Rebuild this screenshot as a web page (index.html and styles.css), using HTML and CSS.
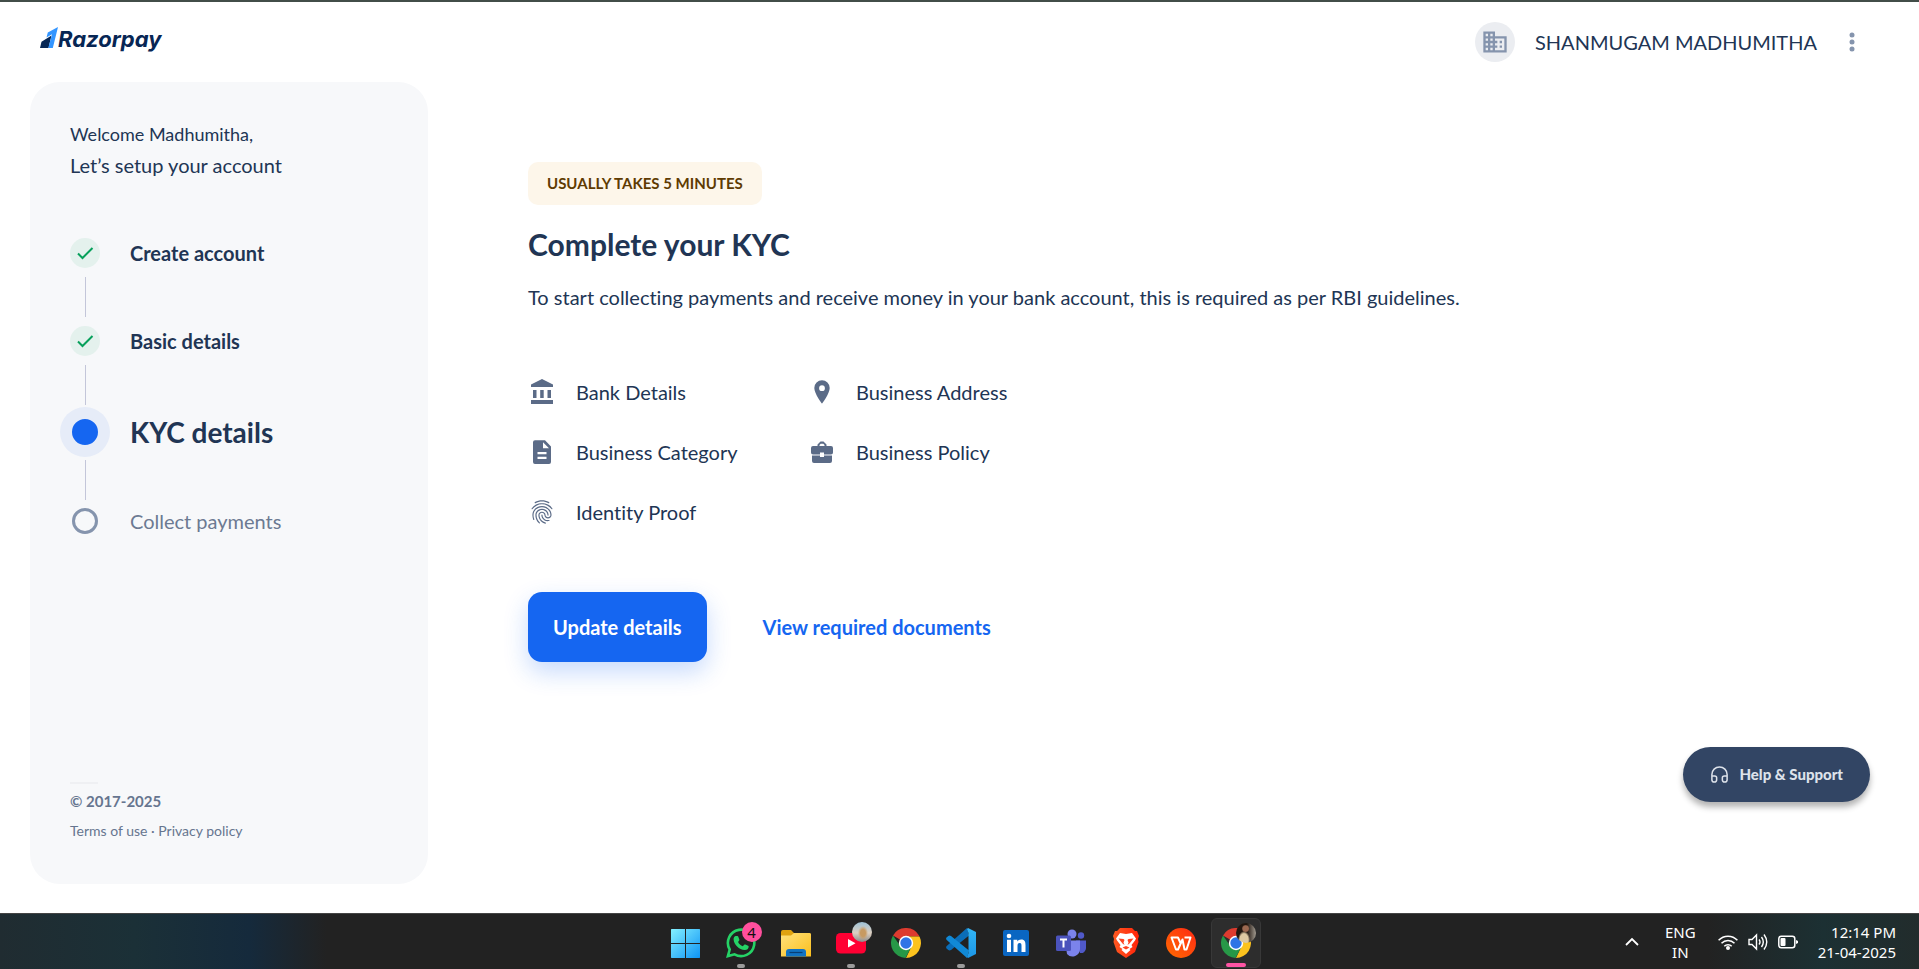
FILE: index.html
```html
<!DOCTYPE html>
<html lang="en">
<head>
<meta charset="utf-8">
<title>Razorpay</title>
<link rel="stylesheet" href="styles.css">
</head>
<body>
<svg class="defs" aria-hidden="true">
  <defs>
    <symbol id="chrome" viewBox="0 0 30 30">
      <path fill="#dd3b2f" d="M15 15 L2 7.500 A15 15 0 0 1 28 7.500 L28 8.500 H15Z"/>
      <path fill="#fcc31e" d="M15 8.500 H28.500 A15 15 0 0 1 15 30 L20.600 18.300Z"/>
      <path fill="#279847" d="M2 7.500 L9.400 18.300 L20.600 18.300 L14.500 30 A15 15 0 0 1 2 7.500Z"/>
      <circle cx="15" cy="15" r="7.200" fill="#fff"/>
      <circle cx="15" cy="15" r="5.700" fill="#2f74e6"/>
    </symbol>
    <symbol id="check" viewBox="0 0 30 30"><path fill="none" stroke="#07a05b" stroke-width="2" d="M8 15.500 L12.500 20 L22.500 10"/></symbol>
    <linearGradient id="g-win" x1="0" y1="0" x2="1" y2="1"><stop offset="0" stop-color="#84f0ff"/><stop offset="1" stop-color="#0d93f5"/></linearGradient>
    <linearGradient id="g-folder" x1="0" y1="0" x2="1" y2="1"><stop offset="0" stop-color="#ffe17c"/><stop offset="1" stop-color="#fbbf1d"/></linearGradient>
    <linearGradient id="g-vs" x1="0" y1="0" x2="0" y2="1"><stop offset="0" stop-color="#32b5f5"/><stop offset="1" stop-color="#1c97e8"/></linearGradient>
    <linearGradient id="g-brave" x1="0" y1="0" x2="1" y2="0"><stop offset="0" stop-color="#ff5a22"/><stop offset="1" stop-color="#ff2309"/></linearGradient>
    <linearGradient id="g-wps" x1="0" y1="1" x2="1" y2="0"><stop offset="0" stop-color="#ff6a00"/><stop offset="1" stop-color="#ff2a14"/></linearGradient>
  </defs>
</svg>

<div class="page">
  <header class="topbar">
    <a class="brand" href="#" aria-label="Razorpay">
      <svg class="brand-mark" viewBox="0 0 18 22" aria-hidden="true">
        <path fill="#072654" d="M1.500 14.800 L11.500 8.500 L8.500 21 H0Z"/>
        <path fill="#3395ff" d="M6.500 10.500 L7.800 5.500 L18 0 L12.800 21 H8.300 L12 7.200Z"/>
      </svg>
      <span class="brand-name">Razorpay</span>
    </a>
    <div class="account">
      <span class="avatar">
        <svg viewBox="0 0 24 24" aria-hidden="true"><path fill="#8594ad" d="M12 7V3H2v18h20V7H12zM6 19H4v-2h2v2zm0-4H4v-2h2v2zm0-4H4V9h2v2zm0-4H4V5h2v2zm4 12H8v-2h2v2zm0-4H8v-2h2v2zm0-4H8V9h2v2zm0-4H8V5h2v2zm10 12h-8v-2h2v-2h-2v-2h2v-2h-2V9h8v10zm-2-8h-2v2h2v-2zm0 4h-2v2h2v-2z"/></svg>
      </span>
      <span class="account-name">SHANMUGAM MADHUMITHA</span>
      <button class="more" type="button" aria-label="More options">
        <svg viewBox="0 0 6 20" aria-hidden="true"><g fill="#8594ad"><circle cx="3" cy="3" r="2.500"/><circle cx="3" cy="10" r="2.500"/><circle cx="3" cy="17" r="2.500"/></g></svg>
      </button>
    </div>
  </header>

  <div class="layout">
    <aside class="sidebar">
      <p class="welcome">Welcome Madhumitha,</p>
      <p class="subtitle">Let’s setup your account</p>
      <ol class="steps">
        <li class="step"><span class="marker done"><svg viewBox="0 0 30 30" aria-hidden="true"><use href="#check"/></svg></span><span class="label strong">Create account</span></li>
        <li class="line"></li>
        <li class="step"><span class="marker done"><svg viewBox="0 0 30 30" aria-hidden="true"><use href="#check"/></svg></span><span class="label strong">Basic details</span></li>
        <li class="line to-current"></li>
        <li class="step current" aria-current="step"><span class="marker now"></span><span class="label">KYC details</span></li>
        <li class="line from-current"></li>
        <li class="step"><span class="marker todo"></span><span class="label muted">Collect payments</span></li>
      </ol>
      <footer class="legal">
        <p class="copyright">© 2017-2025</p>
        <p class="links"><a href="#">Terms of use</a> · <a href="#">Privacy policy</a></p>
      </footer>
    </aside>

    <main class="content">
      <p class="tag">USUALLY TAKES 5 MINUTES</p>
      <h1>Complete your KYC</h1>
      <p class="lead">To start collecting payments and receive money in your bank account, this is required as per RBI guidelines.</p>
      <ul class="needs">
        <li><svg viewBox="0 0 28 28" aria-hidden="true"><path fill="#5b6b87" d="M14 1 L25 6.500 V9 H3 V6.500Z M5 12h3.500v8H5z M12.200 12h3.500v8h-3.500z M19.500 12H23v8h-3.500z M3 22h22v4H3z"/></svg>Bank Details</li>
        <li><svg viewBox="0 0 28 28" aria-hidden="true"><path fill="#5b6b87" fill-rule="evenodd" d="M14 2.300a7.700 7.700 0 0 0-7.700 7.700c0 5.700 7.700 15.600 7.700 15.600s7.700-9.900 7.700-15.600A7.700 7.700 0 0 0 14 2.300zm0 5a2.900 2.900 0 1 1 0 5.800 2.900 2.900 0 0 1 0-5.800z"/></svg>Business Address</li>
        <li><svg viewBox="0 0 28 28" aria-hidden="true"><path fill="#5b6b87" fill-rule="evenodd" d="M7 2.200h10l6 6.300v15.500a2 2 0 0 1-2 2H7a2 2 0 0 1-2-2V4.200a2 2 0 0 1 2-2z M15 4.200v6.100h6z M9.500 14v2.200h9V14z M9.500 18.800V21h9v-2.200z"/></svg>Business Category</li>
        <li><svg viewBox="0 0 28 28" aria-hidden="true"><path fill="#5b6b87" fill-rule="evenodd" d="M9.500 8V6.500l3-3h3l3 3V8H23a2 2 0 0 1 2 2v4.500a2 2 0 0 1-2 2h-7v-2h-4v2H5a2 2 0 0 1-2-2V10a2 2 0 0 1 2-2z M11.500 8h5V7l-1.200-1.300h-2.600L11.500 7z M4 17.500h8v1.500h4v-1.500h8V23a2 2 0 0 1-2 2H6a2 2 0 0 1-2-2z"/></svg>Business Policy</li>
        <li><svg viewBox="0 0 24 24" aria-hidden="true"><path fill="#5b6b87" d="M17.810 4.470c-.080 0-.160-.020-.230-.060C15.660 3.420 14 3 12.010 3c-1.980 0-3.860.470-5.570 1.410-.240.130-.540.040-.680-.200-.130-.240-.040-.550.200-.680C7.820 2.520 9.860 2 12.010 2c2.130 0 3.990.470 6.030 1.520.250.130.340.430.210.670-.090.180-.260.280-.440.280zM3.500 9.720c-.100 0-.200-.030-.290-.090-.230-.160-.280-.470-.120-.700.990-1.400 2.250-2.500 3.750-3.270C9.980 4.040 14 4.030 17.150 5.650c1.500.770 2.760 1.860 3.750 3.250.160.220.110.540-.120.700-.230.160-.540.110-.700-.120-.900-1.260-2.040-2.250-3.390-2.940-2.870-1.470-6.540-1.470-9.400.010-1.360.700-2.500 1.700-3.400 2.960-.080.140-.230.210-.390.210zm6.250 12.070c-.130 0-.260-.050-.350-.150-.870-.870-1.340-1.430-2.010-2.640-.690-1.230-1.050-2.730-1.050-4.340 0-2.970 2.540-5.390 5.660-5.390s5.660 2.420 5.660 5.390c0 .280-.220.500-.500.500s-.500-.220-.500-.500c0-2.420-2.090-4.390-4.660-4.390-2.570 0-4.660 1.970-4.660 4.390 0 1.440.320 2.770.930 3.850.640 1.150 1.080 1.640 1.850 2.420.190.200.190.510 0 .710-.110.100-.240.150-.370.150zm7.170-1.850c-1.190 0-2.240-.300-3.100-.890-1.490-1.010-2.380-2.650-2.380-4.390 0-.280.220-.500.500-.500s.500.220.500.500c0 1.410.720 2.740 1.940 3.560.710.480 1.540.710 2.540.710.240 0 .640-.030 1.040-.100.270-.050.530.130.580.410.050.270-.130.530-.410.580-.570.110-1.070.120-1.210.120zM14.910 22c-.040 0-.090-.010-.130-.020-1.590-.440-2.630-1.030-3.720-2.100-1.400-1.390-2.170-3.240-2.170-5.220 0-1.620 1.380-2.940 3.080-2.940 1.700 0 3.080 1.320 3.080 2.940 0 1.070.930 1.940 2.080 1.940s2.080-.870 2.080-1.940c0-3.770-3.250-6.830-7.250-6.830-2.840 0-5.440 1.580-6.610 4.030-.390.810-.590 1.760-.590 2.800 0 .780.070 2.010.670 3.610.100.260-.030.550-.290.640-.260.100-.550-.040-.640-.290-.490-1.310-.730-2.610-.730-3.960 0-1.200.230-2.290.680-3.240 1.330-2.790 4.280-4.600 7.510-4.600 4.550 0 8.250 3.510 8.250 7.830 0 1.620-1.380 2.940-3.080 2.940s-3.080-1.320-3.080-2.940c0-1.070-.930-1.940-2.080-1.940s-2.080.870-2.080 1.940c0 1.710.660 3.310 1.870 4.510.950.940 1.860 1.460 3.270 1.850.270.070.420.350.350.610-.050.230-.260.380-.470.380z"/></svg>Identity Proof</li>
      </ul>
      <div class="actions">
        <button class="primary" type="button">Update details</button>
        <a class="text-link" href="#">View required documents</a>
      </div>
    </main>
  </div>

  <button class="help" type="button">
    <svg viewBox="0 0 20 20" aria-hidden="true"><path fill="none" stroke="#dde2ea" stroke-width="1.600" d="M2 12 V10 a8 8 0 0 1 16 0 V15.500 a2.500 2.500 0 0 1-5 0 V13.500 a2 2 0 0 1 2-2 H18 M2 11.500 H5 a2 2 0 0 1 2 2 V15.500 a2.500 2.500 0 0 1-5 0 V10"/></svg>
    Help &amp; Support
  </button>
</div>

<footer class="taskbar">
  <nav class="apps" aria-label="Taskbar">
    <button class="app" type="button" aria-label="Start"><svg viewBox="0 0 30 30" aria-hidden="true"><path fill="url(#g-win)" d="M.5 1H14v14H0V1.500z M15 1h13.500l.5.500V15H15z M0 16h14v14H.5L0 29.500z M15 16h14v13.500l-.5.500H15z"/></svg></button>
    <button class="app running" type="button" aria-label="WhatsApp"><svg viewBox="0 0 30 30" aria-hidden="true"><path fill="none" stroke="#25d366" stroke-width="2.600" d="M1.900 28.100 L3.700 21.500 A13.200 13.200 0 1 1 8.500 26.300Z"/><path fill="#25d366" d="M9.500 8h1.800c.6 0 .8.300 1 .8l1 2.600c.2.500.1.900-.2 1.200l-1 1.300c.9 2 2.500 3.500 4.700 4.400l1.400-1.500c.4-.4.700-.5 1.200-.3l2.700 1.300c.5.200.6.500.6 1-.1 2-1.800 3.400-4 3.300C13 21.700 8 16.700 7.600 11.500 7.500 9.800 8.300 8.300 9.500 8z"/></svg><span class="badge">4</span></button>
    <button class="app" type="button" aria-label="File Explorer"><svg viewBox="0 0 30 30" aria-hidden="true"><path fill="#e0a20f" d="M0 4a2 2 0 0 1 2-2h8l3 3h15a2 2 0 0 1 2 2v6H0z"/><path fill="url(#g-folder)" d="M0 7.500 H10 L13 5 H28.500 A1.500 1.500 0 0 1 30 6.500 V28.500 H0z"/><path fill="#1173c3" d="M5 28.500V24a3 3 0 0 1 3-3h14a3 3 0 0 1 3 3v4.500z"/><path stroke="#083f76" stroke-width="1.200" d="M8.500 24.500h13"/></svg></button>
    <button class="app running" type="button" aria-label="YouTube"><svg viewBox="0 0 30 30" aria-hidden="true"><rect y="5" width="30" height="20.500" rx="4.500" fill="#ff0033"/><path fill="#fff" d="M12 11v8.500l7.500-4.200z"/></svg><span class="badge photo city"></span></button>
    <button class="app" type="button" aria-label="Chrome"><svg viewBox="0 0 30 30" aria-hidden="true"><use href="#chrome"/></svg></button>
    <button class="app running" type="button" aria-label="Visual Studio Code"><svg viewBox="0 0 30 30" aria-hidden="true"><path fill="#0a6db8" d="M.5 20.500 Q-.5 19 1 17.700 L21 0 L23 7.500 L5 22 Q3.500 22.800 2.300 22z"/><path fill="#1189d6" d="M.5 9.500 Q-.5 11 1 12.300 L21 30 L23 22.500 L5 8 Q3.500 7.200 2.300 8z"/><path fill="url(#g-vs)" d="M22 0 L30 4 V26 L22 30 L21 29 L22.500 25 V5 L21 1z"/></svg></button>
    <button class="app" type="button" aria-label="LinkedIn"><svg viewBox="0 0 30 30" aria-hidden="true"><rect x="2" y="2" width="26" height="26" rx="2" fill="#0a66c2"/><g fill="#fff"><circle cx="8" cy="8" r="2.300"/><path d="M6 11.800h4V24H6z M12.500 11.800h3.800v1.700c.7-1.200 2-2 3.900-2 3.800 0 4.300 2.500 4.300 5.600V24h-4v-6c0-1.600-.2-2.900-1.800-2.900-1.700 0-2.200 1.200-2.200 2.900v6h-4z"/></g></svg></button>
    <button class="app" type="button" aria-label="Teams"><svg viewBox="0 0 30 30" aria-hidden="true"><circle cx="25" cy="7.500" r="3.200" fill="#5059c9"/><path fill="#5059c9" d="M20 12.500h10V20a5 5 0 0 1-6 5z"/><circle cx="16" cy="6" r="4.500" fill="#7b83eb"/><path fill="#7b83eb" d="M9 12.500h15V21a7.500 7.500 0 0 1-13 5z"/><rect y="7.500" width="15" height="15.500" rx="1.500" fill="#4b53bc"/><path stroke="#fff" stroke-width="2" d="M4 11.500h7M7.500 11.500v8"/></svg></button>
    <button class="app" type="button" aria-label="Brave"><svg viewBox="0 0 30 30" aria-hidden="true"><path fill="url(#g-brave)" d="M9 0h12l3 3h2l2 5-1 3 .5 3L24 24 15 30 6 24 2.500 14l.5-3-1-3 2-5h2z"/><path fill="#fff" d="M9 5l6 1 6-1 4 5.500-1 2-3.500 4.500 1 2-3 2 1 1-4.500 4-4.500-4 1-1-3-2 1-2L6 12.500l-1-2z"/><path fill="#ff4320" d="M7.500 10.500l5 .5 1 1-1 2.500 1 2.500-2-1.500z M22.500 10.500l-5 .5-1 1 1 2.500-1 2.500 2-1.500z M11.500 19.500l3.500-1.500 3.500 1.500-3.500 2z"/></svg></button>
    <button class="app" type="button" aria-label="WPS Office"><svg viewBox="0 0 30 30" aria-hidden="true"><circle cx="15" cy="15" r="15" fill="url(#g-wps)"/><path fill="none" stroke="#fff" stroke-width="2" stroke-linejoin="round" d="M14.500 15 L12 9.500 H5.500 L10 21.500 H12 L16.500 11.500 L18.500 21.500 H20.500 L24.500 9.500 H18.500"/></svg></button>
    <button class="app running active" type="button" aria-label="Chrome, active window"><svg viewBox="0 0 30 30" aria-hidden="true"><use href="#chrome"/></svg><span class="badge photo person"></span></button>
  </nav>
  <div class="tray">
    <svg class="chevron" viewBox="0 0 14 10" aria-hidden="true"><path fill="none" stroke="#fff" stroke-width="1.800" d="M1 8l6-6 6 6"/></svg>
    <span class="lang">ENG<br>IN</span>
    <span class="status">
      <svg viewBox="0 0 20 20" aria-hidden="true"><g fill="none" stroke="#fff" stroke-width="1.500"><path d="M.6 8.300a13 13 0 0 1 18.800 0"/><path d="M3.500 11.300a9 9 0 0 1 13 0"/><path d="M6.300 14.300a5 5 0 0 1 7.400 0"/></g><circle cx="10" cy="16" r="2" fill="#fff"/></svg>
      <svg viewBox="0 0 20 20" aria-hidden="true"><g fill="none" stroke="#fff" stroke-width="1.400"><path d="M1 7.500h3l4.500-4.500v14L4 12.500H1z"/><path d="M11 7.500q2 2.500 0 5M13.500 5q3.600 5 0 10M16 2.500q5.500 7.500 0 15"/></g></svg>
      <svg viewBox="0 0 20 20" aria-hidden="true"><rect x=".8" y="4.300" width="16" height="11.500" rx="2.500" fill="none" stroke="#fff" stroke-width="1.500"/><rect x="2.500" y="6" width="5" height="8" rx="1" fill="#fff"/><path fill="#fff" d="M18 8l2 1v2l-2 1z"/></svg>
    </span>
    <time class="clock" datetime="2025-04-21T12:14">12:14 PM<br>21-04-2025</time>
  </div>
</footer>
</body>
</html>
```
FILE: styles.css
```css
*, *::before, *::after { box-sizing: border-box; }

body {
  margin: 0;
  min-height: 100vh;
  display: flex;
  flex-direction: column;
  background: #fff;
  color: #213554;
  font-family: Lato, "Liberation Sans", sans-serif;
  font-size: 20px;
  font-variant-ligatures: none;
  line-height: 30px;
}

p, h1, ul, ol { margin: 0; padding: 0; list-style: none; }
a { color: inherit; text-decoration: none; }
button { font: inherit; color: inherit; border: 0; padding: 0; background: none; cursor: pointer; }
svg { display: block; flex: none; }
.defs { position: absolute; width: 0; height: 0; }

.page {
  position: relative;
  flex: 1;
  display: flex;
  flex-direction: column;
  border-top: 2px solid #424d48;
  padding-bottom: 29px;
}

/* Header */
.topbar {
  height: 80px;
  flex: none;
  display: flex;
  justify-content: space-between;
  align-items: center;
  padding: 0 58px 0 40px;
}
.brand { display: flex; align-items: flex-end; height: 30px; }
.brand-mark { width: 18px; height: 22px; margin-bottom: 8px; }
.brand-name {
  color: #072654;
  font-family: Inter, "Liberation Sans", sans-serif;
  font-size: 22px;
  font-weight: 700;
  font-style: italic;
  line-height: 36px;
}
.account { display: flex; align-items: center; }
.avatar {
  display: grid;
  place-items: center;
  width: 40px;
  height: 40px;
  border-radius: 50%;
  background: #ebedf1;
}
.avatar svg { width: 28px; height: 28px; }
.account-name { margin-left: 20px; }
.more { margin-left: 28px; padding: 4px; width: 16px; }
.more svg { width: 6px; height: 20px; }

/* Two columns */
.layout { flex: 1; display: flex; }
.sidebar {
  flex: none;
  width: 398px;
  margin-left: 30px;
  padding: 36px 40px;
  border-radius: 30px;
  background: #f7f8fa;
  display: flex;
  flex-direction: column;
}
.welcome { font-size: 18px; line-height: 32px; }
.subtitle { line-height: 30px; }

.steps { margin-top: 58px; }
.step { display: flex; align-items: center; gap: 30px; height: 30px; }
.marker { flex: none; width: 30px; height: 30px; border-radius: 50%; }
.done { background: #e4f1ed; }
.now { background: #1566f1; border: 2px solid #e6ecf8; box-shadow: 0 0 0 10px #e6ecf8; }
.todo { display: grid; place-items: center; }
.todo::before { content: ""; width: 26px; height: 26px; border: 3px solid #8594ad; border-radius: 50%; }
.strong { font-weight: 700; }
.muted { color: #6c7a92; }
.current .label { font-size: 28px; font-weight: 700; }
.line { width: 1px; height: 40px; margin: 9px 15px; background: #c3c6d9; }
.to-current { margin-bottom: 12px; }
.from-current { margin-top: 13px; margin-bottom: 6px; }

.legal { margin-top: auto; color: #66758f; }
.legal::before { content: ""; display: block; width: 28px; height: 2px; background: #eff0f3; }
.copyright { margin-top: 2px; font-size: 15px; font-weight: 700; }
.links { margin-bottom: 2px; font-size: 14px; }

.content { flex: 1; padding: 80px 60px 40px 100px; }
.tag {
  width: fit-content;
  padding: 6px 19px 7px;
  border-radius: 10px;
  background: #fdf6ea;
  color: #5f3b02;
  font-size: 15px;
  font-weight: 700;
}
h1 { margin-top: 19px; font-size: 30px; line-height: 40px; }
.lead { margin-top: 18px; }
.needs {
  display: grid;
  grid-template-columns: 280px 280px;
  row-gap: 30px;
  margin-top: 65px;
}
.needs li { display: flex; align-items: center; gap: 20px; }
.needs svg { width: 28px; height: 28px; }
.actions { display: flex; align-items: center; gap: 56px; margin-top: 65px; font-weight: 700; }
.primary {
  height: 70px;
  padding: 0 25px;
  border-radius: 14px;
  background: #1566f1;
  color: #fff;
  box-shadow: 0 10px 24px rgb(21 102 241 / 24%);
}
.text-link { color: #1566f1; }

.help {
  position: absolute;
  right: 49px;
  bottom: 111px;
  display: flex;
  align-items: center;
  gap: 10px;
  height: 55px;
  padding: 0 27px 1px;
  border-radius: 28px;
  background: #324564;
  color: #dde2ea;
  font-size: 15px;
  font-weight: 900;
  box-shadow: 0 5px 6px rgb(0 0 0 / 30%);
}
.help svg { width: 19px; height: 19px; }

/* Taskbar */
.taskbar {
  flex: none;
  height: 56px;
  display: grid;
  grid-template-columns: 1fr auto 1fr;
  align-items: center;
  border-top: 1px solid #444;
  background: linear-gradient(90deg, #202c31 0, #1b3037 7%, #152a3c 13%, #222 17%, #222 89%, #1c3033 95%, #222c2c 100%);
  color: #fff;
  font-family: "Noto Sans", "Open Sans", sans-serif;
  font-size: 15px;
  line-height: 20px;
}
.apps { grid-column: 2; display: flex; gap: 5px; padding: 2px 0 0 2px; }
.app {
  position: relative;
  display: grid;
  place-items: center;
  width: 50px;
  height: 50px;
  border-radius: 6px;
}
.app svg { width: 30px; height: 30px; }
.running::after {
  content: "";
  position: absolute;
  bottom: 0;
  left: 21px;
  width: 8px;
  height: 4px;
  border-radius: 2px;
  background: #9b9b9b;
}
.active { background: #2d2d2d; border: 1px solid #383838; }
.active::after { left: 14px; width: 20px; background: #ff54a4; }
.badge {
  position: absolute;
  top: 4px;
  right: 4px;
  width: 20px;
  height: 20px;
  border-radius: 50%;
  background: #ff4f9d;
  color: #111;
  text-align: center;
}
.city { background: radial-gradient(ellipse 5px 7px at 55% 55%, #c79a62 0 50%, transparent), linear-gradient(#9dc1d6, #ddd0c2 55%, #8b8a89); }
.person { background: radial-gradient(circle 4px at 48% 28%, #9b6850 0 70%, transparent), radial-gradient(ellipse 6px 9px at 40% 85%, #ddc9a2 0 70%, transparent), linear-gradient(90deg, #21160f 55%, #a39c91); }

.tray { grid-column: 3; justify-self: end; display: flex; align-items: center; padding-right: 23px; }
.chevron { width: 14px; height: 10px; margin-right: 26px; }
.lang { text-align: center; margin-right: 22px; }
.status { display: flex; gap: 10px; margin-right: 20px; }
.status svg { width: 20px; height: 20px; }
.clock { text-align: right; }
```
